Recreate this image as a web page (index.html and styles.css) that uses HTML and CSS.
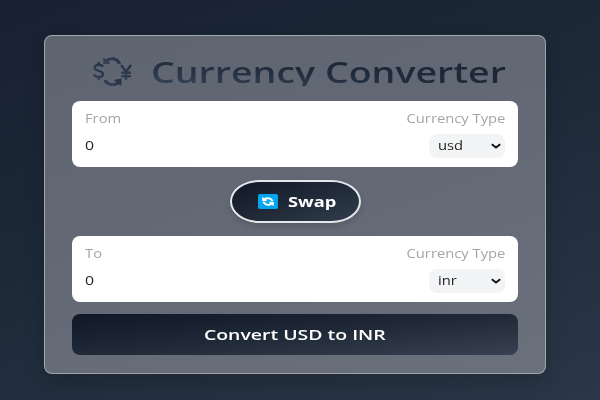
FILE: index.html
```
<!DOCTYPE html>
<html lang="en">
<head>
<meta charset="utf-8">
<title>Currency Converter</title>
<link rel="stylesheet" href="styles.css">
</head>
<body>
<main class="card">
  <h1 class="title">
    <svg class="logo" viewBox="0 0 40 30">
      <defs>
        <linearGradient id="ink" x1="1" y1="0" x2="0" y2="1">
          <stop offset="0" stop-color="#233044"/>
          <stop offset="1" stop-color="#374357"/>
        </linearGradient>
      </defs>
      <g fill="none" stroke="url(#ink)" stroke-width="2.5">
        <path d="M10.4 10.2C9.8 8.700 8.400 8 6.300 8 3.700 8 2 9.200 2 11.200c0 4.300 8.500 2.100 8.500 6.300 0 2-1.800 3.200-4.300 3.200-2.600 0-4.400-.9-4.900-2.900M6.200 5.300V8M6.200 20.500v3"/>
        <path d="M29.300 8.300l5.200 7 5.200-7M34.500 15v8.500M29.500 16.300h10M29.500 19.900h10"/>
      </g>
      <path fill="url(#ink)" d="M11 .5l2.700 2.200C19-1.700 27-.3 29.500 6.700l-3.300.7C24 2.700 19.200 2.500 16.200 4.800L18.600 7 11 7.600z"/>
      <path fill="url(#ink)" d="M29.800 22.300V30l-2.700-1.900C22 31.500 13.500 30.500 11 24.600l3-1.300c2.400 4 7.300 4.700 10.500 2.700l-2.800-2.200z"/>
    </svg>
    <span class="title-text">Currency Converter</span>
  </h1>
  <section class="field">
    <div class="row"><span class="label">From</span><span class="label end">Currency Type</span></div>
    <div class="row">
      <span class="value">0</span>
      <div class="select"><span class="option">usd</span><svg class="chevron" viewBox="0 0 10 6"><path d="M.8 1.200L5 4.500 9.200 1.200"/></svg></div>
    </div>
  </section>
  <button class="swap">
    <svg class="emoji" viewBox="0 0 20 15">
      <rect width="20" height="15" rx="1.800" fill="#00a4ef"/>
      <path fill="#fff" d="M4.200 2.800v4.500h5.300L7.700 5.800c2.200-1 4.700-.6 5.500 1.200h2.200C14.600 3.500 9.500 2.200 6 4.300zM15.800 12.200V7.700h-5.300l1.800 1.500c-2.200 1-4.700.6-5.500-1.200H4.600c.8 3.500 5.900 4.800 9.400 2.700z"/>
    </svg>
    <span class="swap-text">Swap</span>
  </button>
  <section class="field">
    <div class="row"><span class="label">To</span><span class="label end">Currency Type</span></div>
    <div class="row">
      <span class="value">0</span>
      <div class="select"><span class="option">inr</span><svg class="chevron" viewBox="0 0 10 6"><path d="M.8 1.200L5 4.500 9.200 1.200"/></svg></div>
    </div>
  </section>
  <button class="convert"><span class="convert-text">Convert USD to INR</span></button>
</main>
</body>
</html>
```
FILE: styles.css
```
* { box-sizing: border-box; }

body {
  margin: 0;
  height: 400px;
  padding: 35px 54px 26px 44px;
  overflow: hidden;
  background: linear-gradient(160deg, #182132, #1d2937 45%, #2b3748);
  font-family: "Open Sans", "Noto Sans", sans-serif;
}

.card {
  height: 339px;
  padding: 21px 27px 0;
  border: 1px solid rgba(255, 255, 255, 0.4);
  border-radius: 8px;
  background: linear-gradient(160deg, #5f6570, #636a75 50%, #6a717c);
  box-shadow: 0 10px 20px rgba(0, 0, 0, 0.16);
}

.title {
  display: flex;
  height: 29px;
  margin: 0 0 15px;
  padding-left: 20px;
  gap: 19px;
}

.logo { flex: none; width: 40px; height: 29px; }

.title-text {
  flex: none;
  height: 29px;
  font-size: 28px;
  font-weight: 600;
  line-height: 30px;
  white-space: nowrap;
  transform: scaleX(1.34);
  transform-origin: left;
  background: linear-gradient(to bottom left, #182131, #1f2b3b 50%, #364256);
  background-clip: text;
  -webkit-background-clip: text;
  color: transparent;
}

.field {
  height: 66px;
  padding: 10px 13px 0;
  border-radius: 8px;
  background: #fff;
}

.row {
  display: flex;
  justify-content: space-between;
  align-items: center;
  height: 16px;
}

.row + .row { height: 23px; margin-top: 7px; }

.label, .value, .option {
  font-size: 12px;
  line-height: 16px;
  color: #a5a5a5;
  transform: scaleX(1.23);
  transform-origin: left;
}

.label.end { transform-origin: right; }

.value { color: #222; transform: scaleX(1.32); }

.select {
  display: flex;
  align-items: center;
  justify-content: space-between;
  width: 76px;
  height: 24px;
  padding: 0 4px 0 9px;
  border-radius: 8px;
  background: #f3f4f6;
}

.option { color: #222; }

.chevron {
  width: 10px;
  height: 6px;
  fill: none;
  stroke: #111;
  stroke-width: 1.800;
}

button { border: 0; font-family: inherit; color: #fff; }

.swap {
  display: flex;
  align-items: center;
  gap: 10px;
  width: 131px;
  height: 43px;
  margin: 13px auto;
  padding: 0 0 0 26px;
  border: 2px solid #e4e6e9;
  border-radius: 30px / 22px;
  background: linear-gradient(160deg, #111827, #1f2937 50%, #323e4e) border-box;
  box-shadow: 0 3px 6px rgba(0, 0, 0, 0.15);
}

.emoji { width: 20px; height: 15px; }

.swap-text {
  font-size: 14.500px;
  font-weight: 700;
  transform: scaleX(1.26);
  transform-origin: left;
}

.convert {
  display: block;
  width: 100%;
  height: 41px;
  margin-top: 12px;
  padding: 0 0 1px;
  border-radius: 8px;
  background: linear-gradient(to bottom right, #111827, #1f2937 50%, #374151);
}

.convert-text {
  display: inline-block;
  font-size: 14.500px;
  font-weight: 600;
  transform: scaleX(1.34);
}
```
